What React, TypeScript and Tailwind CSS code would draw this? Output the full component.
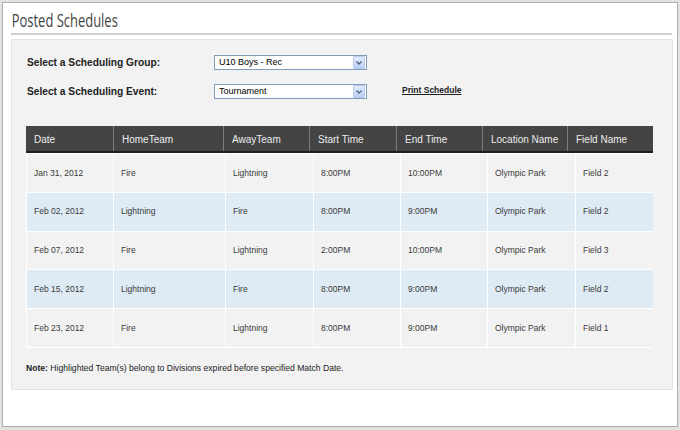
import React from "react";

const headW = [87, 110, 86, 87, 86, 85, 86];
const bodyW = [88, 112, 88, 87, 87, 88, 77];
const heads = ["Date", "HomeTeam", "AwayTeam", "Start Time", "End Time", "Location Name", "Field Name"];
const rows = [
  ["Jan 31, 2012", "Fire", "Lightning", "8:00PM", "10:00PM", "Olympic Park", "Field 2"],
  ["Feb 02, 2012", "Lightning", "Fire", "8:00PM", "9:00PM", "Olympic Park", "Field 2"],
  ["Feb 07, 2012", "Fire", "Lightning", "2:00PM", "10:00PM", "Olympic Park", "Field 3"],
  ["Feb 15, 2012", "Lightning", "Fire", "8:00PM", "9:00PM", "Olympic Park", "Field 2"],
  ["Feb 23, 2012", "Fire", "Lightning", "8:00PM", "9:00PM", "Olympic Park", "Field 1"],
];

function Select({ value }: { value: string }) {
  return (
    <div className="w-[153px] h-[15px] bg-white border border-[#7f9db9] flex items-center">
      <span className="flex-1 pl-[4px] text-[9px] leading-none text-black">{value}</span>
      <div className="w-[12px] h-[13px] mr-[1px] rounded-[1px] border border-[#b7c9ec] bg-gradient-to-b from-[#e2ebfb] to-[#bcd0f4] flex items-center justify-center">
        <svg width="6" height="4" viewBox="0 0 6 4">
          <path d="M0.5 0.5 L3 3 L5.5 0.5" fill="none" stroke="#4d6185" strokeWidth="1.3" />
        </svg>
      </div>
    </div>
  );
}

export default function App() {
  return (
    <div className="w-[680px] h-[430px] bg-[#e2e2e2] p-[2px]" style={{ fontFamily: '"Liberation Sans", Arial, sans-serif' }}>
      <div className="h-[425px] bg-white border border-[#adadad] flex flex-col">
        <div className="ml-[8px] mr-[5px] h-[32px] border-b-2 border-[#cfcfcf] flex items-end pb-[1px]">
          <span
            className="pl-[1px] text-[18px] leading-[24px] text-[#444] origin-left scale-x-[0.72] whitespace-nowrap"
            style={{ fontFamily: '"Open Sans", sans-serif' }}
          >
            Posted Schedules
          </span>
        </div>
        <div className="ml-[8px] mr-[4px] mt-[4px] h-[351px] bg-[#f2f2f2] border border-[#e2e2e2] pl-[14px] pt-[15px]">
          <div className="flex items-center h-[15px]">
            <span className="w-[188px] pl-[1px] text-[10.2px] font-bold text-[#222]">Select a Scheduling Group:</span>
            <Select value="U10 Boys - Rec" />
          </div>
          <div className="flex items-center h-[15px] mt-[14px]">
            <span className="w-[188px] pl-[1px] text-[10.2px] font-bold text-[#222]">Select a Scheduling Event:</span>
            <Select value="Tournament" />
            <span className="ml-[35px] text-[8.5px] font-bold underline text-[#222] -mt-[3px]">Print Schedule</span>
          </div>

          <div className="mt-[27px] w-[627px]">
            <div className="flex h-[27px] bg-[#444444] border-b-2 border-[#1e1e1e]">
              {heads.map((h, i) => (
                <div
                  key={h}
                  className={`flex items-center pl-[8px] pt-[2px] text-[10px] text-[#ececec] ${i > 0 ? "border-l border-[#7c7c7c]" : ""}`}
                  style={{ width: headW[i] }}
                >
                  {h}
                </div>
              ))}
            </div>
            <div className="border-t-[1.5px] border-white">
              {rows.map((r, ri) => (
                <div
                  key={ri}
                  className={`flex h-[38.75px] border-b-[1.75px] border-l border-white ${ri % 2 === 1 ? "bg-[#deeaf4]" : "bg-[#f2f2f2]"}`}
                >
                  {r.map((c, ci) => (
                    <div
                      key={ci}
                      className={`flex items-center pl-[7px] text-[8.5px] text-[#3a3a3a] ${ci < 6 ? "border-r-[1.75px] border-white" : ""}`}
                      style={{ width: ci === 0 ? bodyW[0] - 1 : bodyW[ci] }}
                    >
                      {c}
                    </div>
                  ))}
                </div>
              ))}
            </div>
          </div>

          <div className="mt-[14px] text-[8.6px] text-[#222]">
            <span className="font-bold">Note:</span> Highlighted Team(s) belong to Divisions expired before specified Match Date.
          </div>
        </div>
      </div>
    </div>
  );
}
